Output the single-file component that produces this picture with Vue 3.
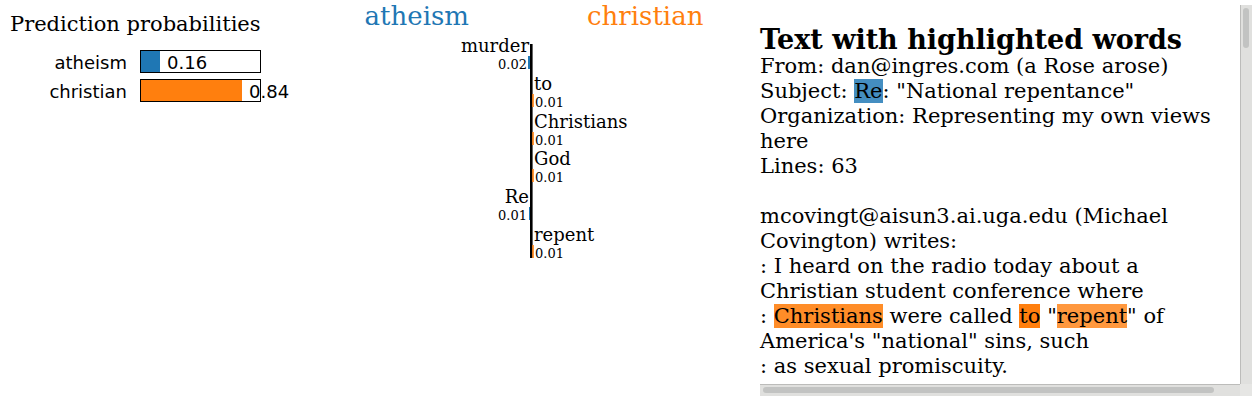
<script setup>
const predictions = [
  { name: 'atheism', value: 0.16, color: '#1f77b4', y: 51 },
  { name: 'christian', value: 0.84, color: '#ff7f0e', y: 80 }
]

const features = [
  { word: 'murder', value: '0.02', side: 'left', bar: 2 },
  { word: 'to', value: '0.01', side: 'right', bar: 2 },
  { word: 'Christians', value: '0.01', side: 'right', bar: 2 },
  { word: 'God', value: '0.01', side: 'right', bar: 2 },
  { word: 'Re', value: '0.01', side: 'left', bar: 1 },
  { word: 'repent', value: '0.01', side: 'right', bar: 2 }
].map((f, i) => ({ ...f, y: Math.round(i * 37.8) }))

const barWidth = (v) => Math.round(v * 122)
</script>

<template>
  <main class="explanation">
    <section class="predictions">
      <svg width="340" height="120" role="img" aria-label="Prediction probabilities">
        <text class="title" x="10" y="31">Prediction probabilities</text>
        <g v-for="p in predictions" :key="p.name">
          <text class="sans" x="127" :y="p.y + 18" text-anchor="end">{{ p.name }}</text>
          <rect :x="140" :y="p.y" :width="barWidth(p.value)" height="21" :fill="p.color" />
          <rect class="frame" x="140.5" :y="p.y - 0.5" width="120" height="22" />
          <text class="sans" :x="147 + barWidth(p.value)" :y="p.y + 18">{{ p.value }}</text>
        </g>
      </svg>
    </section>

    <section class="features">
      <svg width="400" height="270" role="img" aria-label="Word weights">
        <text class="class-name atheism" x="129" y="25" text-anchor="end">atheism</text>
        <text class="class-name christian" x="247" y="25">christian</text>
        <rect x="190" y="44" width="2" height="214" />
        <rect x="192" y="44" width="1" height="214" fill-opacity="0.6" />
        <g v-for="f in features" :key="f.word">
          <template v-if="f.side === 'left'">
            <text class="word" x="189" :y="52 + f.y" text-anchor="end">{{ f.word }}</text>
            <rect class="atheism" :x="190 - f.bar" :y="56 + f.y" :width="f.bar" height="13" />
            <text class="weight" x="187" :y="69 + f.y" text-anchor="end">{{ f.value }}</text>
          </template>
          <template v-else>
            <text class="word" x="194" :y="52 + f.y">{{ f.word }}</text>
            <rect class="christian bar" x="192" :y="56 + f.y" :width="f.bar" height="13" />
            <text class="weight" x="195" :y="69 + f.y">{{ f.value }}</text>
          </template>
        </g>
      </svg>
    </section>

    <section class="document">
      <article class="text">
        <h1>Text with highlighted words</h1>
        <p>
          From: dan@ingres.com (a Rose arose)<br>
          Subject: <mark class="re">Re</mark>: "National repentance"<br>
          Organization: Representing my own views here<br>
          Lines: 63<br>
          <br>
          mcovingt@aisun3.ai.uga.edu (Michael Covington) writes:<br>
          : I heard on the radio today about a Christian student conference where<br>
          : <mark class="christians">Christians</mark> were called <mark class="to">to</mark> "<mark class="repent">repent</mark>" of America's "national" sins, such<br>
          : as sexual promiscuity.
        </p>
      </article>
      <div class="track vertical"><div class="thumb"></div></div>
      <div class="track horizontal"><div class="thumb"></div></div>
      <div class="corner"></div>
    </section>
  </main>
</template>

<style>
body {
  margin: 0;
  background: #fff;
}
</style>

<style scoped>
.explanation {
  display: flex;
  align-items: flex-start;
  color: #000;
  font-family: "DejaVu Serif", serif;
}

.explanation svg {
  display: block;
}

.predictions {
  flex: 0 0 340px;
}

.features {
  flex: 0 0 400px;
}

.title {
  font-size: 21px;
}

.sans {
  font-family: "DejaVu Sans", sans-serif;
  font-size: 18px;
}

.frame {
  fill: none;
  stroke: #000;
}

.class-name {
  font-size: 26px;
}

.atheism {
  fill: #1f77b4;
}

.christian {
  fill: #ff7f0e;
}

.bar {
  fill-opacity: 0.8;
}

.word {
  font-size: 18px;
}

.weight {
  font-size: 13px;
}

.document {
  flex: 1;
  display: grid;
  grid-template-columns: 1fr 12px;
  grid-template-rows: auto 12px;
  margin: 5px 3px 0 20px;
}

.text {
  padding: 20px 0 5px;
  font-size: 21px;
  line-height: 25px;
}

h1 {
  margin: 0;
  font-size: 27px;
  line-height: 29px;
}

p {
  margin: 0;
}

mark {
  color: inherit;
}

.re {
  background: #448ec1;
}

.christians {
  background: #ff8d28;
}

.to {
  background: #ff7f0e;
}

.repent {
  background: #ff983e;
}

.track {
  box-sizing: border-box;
  background: #e0e0de;
}

.vertical {
  border-left: 1px solid #bcbcba;
  padding: 3px 3px 0 2px;
}

.vertical .thumb {
  height: 40px;
}

.horizontal {
  border-top: 1px solid #bcbcba;
  padding: 2px 0 3px 3px;
}

.horizontal .thumb {
  width: 94.5%;
  height: 6px;
}

.thumb {
  border-radius: 3px;
  background: #c2c3c2;
}

.corner {
  background: #e6e6e4;
}
</style>
